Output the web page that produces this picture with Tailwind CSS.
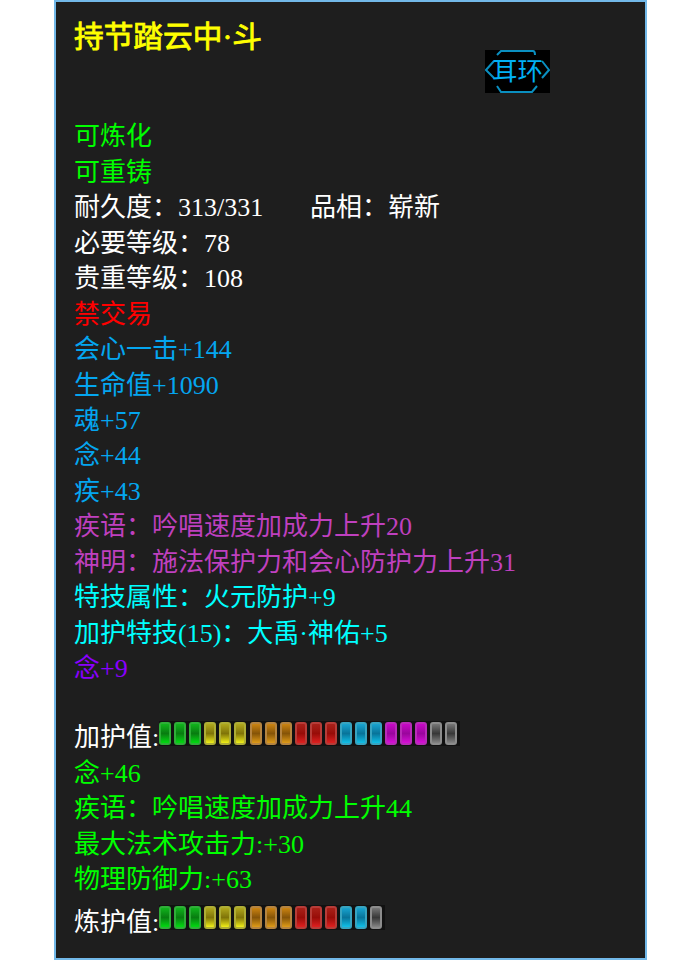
<!DOCTYPE html>
<html lang="zh-CN">
<head>
    <meta charset="UTF-8">
    <meta name="viewport" content="width=device-width, initial-scale=1.0">
    <title>持节踏云中·斗</title>
    <script src="https://cdn.jsdelivr.net/npm/@tailwindcss/browser@4"></script>
</head>
<body class="bg-white">
    <div class="ml-[54px] h-[960px] w-[593px] overflow-hidden border-2 border-[#72b8e8] bg-[#1e1e1e] pl-[18px] font-['Liberation_Serif','Noto_Sans_CJK_SC',serif] text-[26px] leading-[35.45px] whitespace-nowrap text-white">
        <header class="flex h-[117.4px] items-start">
            <h1 class="w-[411px] pt-[15px] text-[29.7px] leading-[40px] text-[#ffff00] [-webkit-text-stroke:0.8px_#ffff00]">持节踏云中·斗</h1>
            <div class="relative mt-[48px] h-[43px] w-[65px] bg-black text-center text-[25.5px] leading-[43px] text-[#00b0f5]">
                <svg class="absolute inset-0" width="65" height="43" viewBox="0 0 65 43" fill="none" stroke="#0a8fc0" stroke-width="2">
                    <path d="M12 5L16 1H48Q50 1 50 5M12 36L16 42H47L52 36M9 11L1 20L9 28M57 11L64 20L57 28" />
                </svg>
                <span class="relative">耳环</span>
            </div>
        </header>

        <section>
            <p class="text-[#00ff00]">可炼化</p>
            <p class="text-[#00ff00]">可重铸</p>
            <p class="flex"><span class="w-[236px]">耐久度：313/331</span><span>品相：崭新</span></p>
            <p>必要等级：78</p>
            <p>贵重等级：108</p>
            <p class="text-[#ff0000]">禁交易</p>
            <div class="text-[#04a6f0]">
                <p>会心一击+144</p>
                <p>生命值+1090</p>
                <p>魂+57</p>
                <p>念+44</p>
                <p>疾+43</p>
            </div>
            <div class="text-[#bf40bf]">
                <p>疾语：吟唱速度加成力上升20</p>
                <p>神明：施法保护力和会心防护力上升31</p>
            </div>
            <div class="text-[#00ffff]">
                <p>特技属性：火元防护+9</p>
                <p>加护特技(15)：大禹·神佑+5</p>
            </div>
            <p class="text-[#8a00ff]">念+9</p>
        </section>

        <section class="mt-[33px]">
            <div class="flex h-[36px]">
                <span>加护值:</span>
                <div id="guardBar" class="mt-px flex h-[25px] bg-[#111111]"></div>
            </div>
            <div class="text-[#00ff00]">
                <p>念+46</p>
                <p>疾语：吟唱速度加成力上升44</p>
                <p>最大法术攻击力:+30</p>
                <p>物理防御力:+63</p>
            </div>
            <div class="mt-[7.5px] flex h-[36px]">
                <span>炼护值:</span>
                <div id="refineBar" class="flex h-[25px] bg-[#111111]"></div>
            </div>
        </section>
    </div>
    <script>
        const CELLS = {
            green: 'border-[#2fae38] from-[#10b41c] via-[#087c10] to-[#00dc10]',
            yellow: 'border-[#aead35] from-[#b0a81c] via-[#807408] to-[#f0f018]',
            orange: 'border-[#b58440] from-[#cc8410] via-[#865408] to-[#e09c18]',
            red: 'border-[#b63c38] from-[#a82018] via-[#980c08] to-[#e02020]',
            cyan: 'border-[#38a4c0] from-[#18a4d0] via-[#08749a] to-[#10c0e8]',
            magenta: 'border-[#b82cb8] from-[#c808c8] via-[#9a069c] to-[#d810d8]',
            gray: 'border-[#8c8c8c] from-[#777777] via-[#383838] to-[#858585]'
        };

        // groups: list of [color, count]
        function drawBar(id, groups) {
            const bar = document.getElementById(id);
            groups.forEach(([color, count]) => {
                for (let i = 0; i < count; i++) {
                    const cell = document.createElement('div');
                    cell.className = 'mt-px mr-[3.05px] h-[23px] w-[12px] rounded-[3px] border-2 bg-linear-to-b ' + CELLS[color];
                    bar.appendChild(cell);
                }
            });
        }

        drawBar('guardBar', [['green', 3], ['yellow', 3], ['orange', 3], ['red', 3], ['cyan', 3], ['magenta', 3], ['gray', 2]]);
        drawBar('refineBar', [['green', 3], ['yellow', 3], ['orange', 3], ['red', 3], ['cyan', 2], ['gray', 1]]);
    </script>
</body>
</html>
